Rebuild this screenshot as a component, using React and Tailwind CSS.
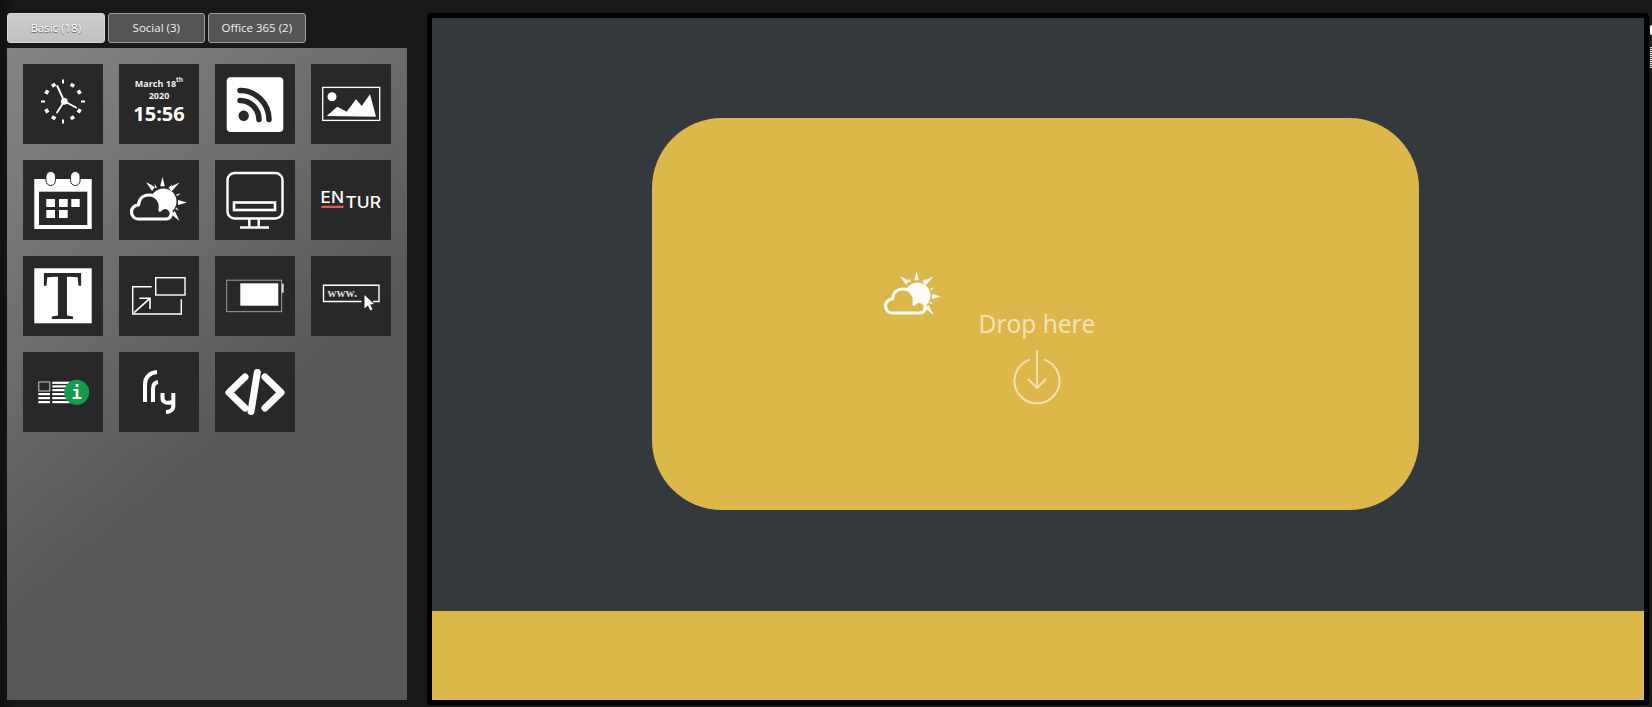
const tileSvg = "w-20 h-20 block";

function Clock() {
  const ticks = [0, 30, 60, 90, 120, 150, 180, 210, 240, 270, 300, 330];
  return (
    <svg viewBox="0 0 80 80" className={tileSvg}>
      {ticks.map((a) => (
        <rect
          key={a}
          x={a % 90 === 0 ? 39 : 38}
          y={a % 90 === 0 ? 15.5 : 17}
          width={a % 90 === 0 ? 2 : 4}
          height={a % 90 === 0 ? 4 : 3.6}
          fill="#fff"
          transform={`rotate(${a} 40 37.5)`}
        />
      ))}
      <g stroke="#fff" strokeWidth="2" fill="none" strokeLinecap="round">
        <path d="M41.3 37.3 34.3 22" />
        <path d="M41.3 37.3 53 43.5" strokeWidth="1.8" />
        <path d="M41.3 37.3 34 48.5" strokeWidth="1.8" />
      </g>
      <circle cx="41.3" cy="37.3" r="3.4" fill="#fff" />
    </svg>
  );
}

function DateTile() {
  return (
    <div className="w-20 h-20 pt-[14px] flex flex-col items-center text-[#eeeeee] font-bold font-['Open_Sans',sans-serif]">
      <div className="text-[9px] leading-[12px]">
        March 18<sup className="text-[6.5px] leading-none align-[2px]">th</sup>
      </div>
      <div className="text-[9px] leading-[11px]">2020</div>
      <div className="text-[20px] leading-[26px] text-white">15:56</div>
    </div>
  );
}

function Rss() {
  return (
    <svg viewBox="0 0 80 80" className={tileSvg}>
      <rect x="11.7" y="13.3" width="56.6" height="54.7" rx="4" fill="#fff" />
      <circle cx="28.7" cy="51.7" r="5.2" fill="#282828" />
      <g stroke="#282828" strokeWidth="5.5" fill="none" strokeLinecap="round">
        <path d="M25 26.5A29 29 0 0 1 54 55.5" />
        <path d="M25 36.5A19 19 0 0 1 44 55.5" />
      </g>
    </svg>
  );
}

function ImageIcon() {
  return (
    <svg viewBox="0 0 80 80" className={tileSvg}>
      <rect x="11.7" y="23.4" width="57" height="33" fill="none" stroke="#fff" strokeWidth="1.3" />
      <circle cx="21" cy="32.7" r="4.5" fill="#fff" />
      <path d="M15.7 52 26.3 42.7 35.7 47.7 45 35.3 50.7 42 59 30.3 65 52.7Z" fill="#fff" />
    </svg>
  );
}

function Calendar() {
  return (
    <svg viewBox="0 0 80 80" className={tileSvg}>
      <rect x="11.3" y="19" width="57.4" height="50" fill="#fff" />
      <rect x="16" y="31.7" width="48.3" height="33.3" fill="#282828" />
      <rect x="23" y="11.5" width="9.4" height="14" rx="4.7" fill="#fff" stroke="#282828" strokeWidth="1" />
      <rect x="47.6" y="11.5" width="9.4" height="14" rx="4.7" fill="#fff" stroke="#282828" strokeWidth="1" />
      <g fill="#fff">
        <rect x="23.3" y="39" width="8.7" height="8" />
        <rect x="36" y="39" width="8.7" height="8" />
        <rect x="48.3" y="39" width="8.4" height="8" />
        <rect x="23.3" y="50" width="8.7" height="8" />
        <rect x="36" y="50" width="8.7" height="8" />
      </g>
    </svg>
  );
}

function Weather({ fill = "#282828", className = tileSvg }) {
  return (
    <svg viewBox="0 0 80 80" className={className}>
      <g fill="#fff">
        <path d="M43.5 17 45.8 26.3H41.2Z" />
        <path d="M27 22 36 27 33 31Z" />
        <path d="M60.5 22.5 52.5 31.5 49.5 27.5Z" />
        <path d="M35.5 23.5 38 27.5 36.2 28.3Z" />
        <path d="M53 24.5 51.5 28.5 49.8 27.5Z" />
        <path d="M68 42.5 59 45V40Z" />
        <path d="M61.5 33.5 58 36.3 57.3 34.6Z" />
        <path d="M60 50.5 56.5 49 57 47.2Z" />
        <path d="M60.5 61 52.5 54.5 55.8 51Z" />
        <circle cx="44.5" cy="41.5" r="13" />
      </g>
      <path
        d="M19 59H47A5.5 5.5 0 0 0 50 49C47 46.5 43.5 47.5 41 50 42.5 42 38 35 30 35 24 35 20 39 19.5 45 15.5 45 12.5 48 12.5 52 12.5 56 15.5 59 19 59Z"
        fill={fill}
        stroke="#fff"
        strokeWidth="3.2"
        strokeLinejoin="round"
      />
    </svg>
  );
}

function Monitor() {
  return (
    <svg viewBox="0 0 80 80" className={tileSvg}>
      <g fill="none" stroke="#fff" strokeWidth="2.4">
        <rect x="12.5" y="13" width="55" height="45.5" rx="7" />
        <rect x="19" y="42.5" width="41" height="7.5" strokeWidth="2.6" />
        <path d="M34.3 58.5V67M43.7 58.5V67M25 67.5H54" />
      </g>
    </svg>
  );
}

function Entur() {
  return (
    <svg viewBox="0 0 80 80" className={tileSvg} fontFamily="Inter, sans-serif" fontWeight="500" fill="#fff">
      <text x="9.5" y="42.7" fontSize="15.5" textLength="23.5" lengthAdjust="spacingAndGlyphs">EN</text>
      <rect x="10.3" y="45.7" width="22.2" height="2.3" fill="#e85454" />
      <text x="34.5" y="48.3" fontSize="16" textLength="35.5" lengthAdjust="spacingAndGlyphs">TUR</text>
    </svg>
  );
}

function TextIcon() {
  return (
    <svg viewBox="0 0 80 80" className={tileSvg}>
      <rect x="11.3" y="12.3" width="57.4" height="55" fill="#fff" />
      <text
        x="20"
        y="63"
        fontFamily="'Liberation Serif', serif"
        fontWeight="700"
        fontSize="70"
        fill="#282828"
        textLength="39"
        lengthAdjust="spacingAndGlyphs"
      >
        T
      </text>
    </svg>
  );
}

function Resize() {
  return (
    <svg viewBox="0 0 80 80" className={tileSvg}>
      <g fill="none" stroke="#fff" strokeWidth="1.4">
        <rect x="36.7" y="21.7" width="29.3" height="17.3" />
        <path d="M32.7 30.7H13.7V58H62.3V43.3" />
        <path d="M15 56.7 31 42.3M20.3 42.3H31V53" strokeWidth="1.6" />
      </g>
    </svg>
  );
}

function Battery() {
  return (
    <svg viewBox="0 0 80 80" className={tileSvg}>
      <rect x="11.7" y="24.2" width="55" height="31.5" fill="none" stroke="#aaa" strokeWidth="0.9" />
      <rect x="25.3" y="27.3" width="38" height="22.4" fill="#fff" />
      <rect x="66.7" y="27.7" width="2" height="9" fill="#ddd" />
    </svg>
  );
}

function Www() {
  return (
    <svg viewBox="0 0 80 80" className={tileSvg}>
      <path d="M50.5 45.5H12.5V29.3H68V45.5H62" fill="none" stroke="#fff" strokeWidth="1.4" />
      <text x="16.5" y="41" fontFamily="'Liberation Serif', serif" fontWeight="700" fontSize="12.5" fill="#ddd">www.</text>
      <path d="M53.5 39 53.5 52.5 56.8 49.5 59.5 54.5 61.5 53.3 59 48.5 63 48Z" fill="#fff" />
    </svg>
  );
}

function NewsInfo() {
  return (
    <svg viewBox="0 0 80 80" className={tileSvg}>
      <rect x="15.8" y="30" width="11" height="9" fill="none" stroke="#ccc" strokeWidth="1" />
      <g fill="#fff">
        <rect x="15.3" y="41" width="11.7" height="2.2" />
        <rect x="15.3" y="45" width="11.7" height="2.2" />
        <rect x="15.3" y="49" width="11.7" height="2.2" />
        <rect x="29.3" y="29.7" width="18" height="2.2" />
        <rect x="29.3" y="33.3" width="18" height="2.2" />
        <rect x="29.3" y="37" width="18" height="2.2" />
        <rect x="29.3" y="41" width="18" height="2.2" />
        <rect x="29.3" y="45" width="18" height="2.2" />
        <rect x="29.3" y="49" width="18" height="2.2" />
      </g>
      <circle cx="53.7" cy="40.3" r="12.5" fill="#149b4d" />
      <text x="53.7" y="46.5" textAnchor="middle" fontFamily="'DejaVu Sans Mono', monospace" fontWeight="700" fontSize="17" fill="#fff">i</text>
    </svg>
  );
}

function Fry() {
  return (
    <svg viewBox="0 0 80 80" className={tileSvg}>
      <g fill="none" stroke="#fff" strokeWidth="4">
        <path d="M26 50V32C26 25 31 20.5 38 20" />
        <path d="M34 50V37C34 33 36 30.5 39 30" />
        <path d="M43.5 41V46C43.5 50 47 52 54 50" />
        <path d="M54.3 41V54C54.3 58 51 60 47 60" />
      </g>
    </svg>
  );
}

function Code() {
  return (
    <svg viewBox="0 0 80 80" className={tileSvg}>
      <g fill="none" stroke="#fff" strokeWidth="7" strokeLinecap="round" strokeLinejoin="round">
        <path d="M30 25 14 40.5 30 56" />
        <path d="M50 25 66 40.5 50 56" />
        <path d="M42.3 20.5 36 59.5" />
      </g>
    </svg>
  );
}

const tiles = [
  Clock, DateTile, Rss, ImageIcon,
  Calendar, Weather, Monitor, Entur,
  TextIcon, Resize, Battery, Www,
  NewsInfo, Fry, Code,
];

const tabs = [
  { label: "Basic (18)", active: true },
  { label: "Social (3)" },
  { label: "Office 365 (2)" },
];

export default function App() {
  return (
    <div className="flex h-[707px] w-[1652px] overflow-hidden bg-[#181818] font-['Open_Sans',sans-serif]">
      {/* Widget picker */}
      <div className="w-[427px] shrink-0 pl-[7px] pt-[13px] pb-[7px] flex flex-col bg-gradient-to-r from-[#111111] from-[0%] to-[#181818] to-[4%]">
        <div className="flex gap-[3px] h-[30px] mb-[5px]">
          {tabs.map((t) => (
            <div
              key={t.label}
              className={
                t.active
                  ? "w-[97.5px] flex items-center justify-center rounded-[3px] border border-[#d8d8d8] bg-gradient-to-b from-[#cccccc] to-[#c0c0c0] text-[11.5px] text-white [text-shadow:0_1px_1px_#555]"
                  : "w-[97.5px] flex items-center justify-center rounded-[3px] border border-[#a0a0a0] bg-[#555555] text-[11.5px] text-[#f0f0f0]"
              }
            >
              {t.label}
            </div>
          ))}
        </div>
        <div className="w-[400px] flex-1 p-4 bg-[linear-gradient(140deg,#848484_0%,#707070_28%,#585858_58%,#585858_100%)]">
          <div className="grid grid-cols-4 gap-4 w-fit">
            {tiles.map((Tile, i) => (
              <div key={i} className="w-20 h-20 bg-[#282828]">
                <Tile />
              </div>
            ))}
          </div>
        </div>
      </div>

      {/* Preview */}
      <div className="w-[222px] grow mt-[13px] mb-[2px] border-[5px] border-black rounded-[4px] bg-[#34393d] flex flex-col">
        <div className="flex-1 flex justify-center pt-[100px] relative">
          <div className="w-[767px] h-[392px] -ml-[5px] rounded-[70px] bg-[#dcb84a] flex flex-col items-center pt-[190px] pl-[3px]">
            <div className="text-[24.6px] leading-[32px] text-[#f1e3b8]">Drop here</div>
            <svg viewBox="0 0 48 56" className="w-12 h-14 mt-[10px]" fill="none" stroke="#f1e3b8" strokeWidth="1.8">
              <path d="M17 9.5A22.5 22.5 0 1 0 31 9.5" />
              <path d="M24 0V38M15 29 24 38 33 29" />
            </svg>
          </div>
          {/* widget being dragged */}
          <div className="absolute left-[441px] top-[236px] opacity-95">
            <Weather fill="#dcb84a" />
          </div>
        </div>
        <div className="h-[89px] bg-[#dcb84a]" />
      </div>

      {/* clipped scrollbar sliver */}
      <div className="w-[3px] shrink-0 flex flex-col pt-[25px] pl-px">
        <div className="h-[10px] bg-white rounded-l-full" />
        <div className="h-[21px] mt-[12px] bg-[repeating-linear-gradient(180deg,#ddd_0,#ddd_1px,#555_1px,#555_2px)]" />
      </div>
    </div>
  );
}
